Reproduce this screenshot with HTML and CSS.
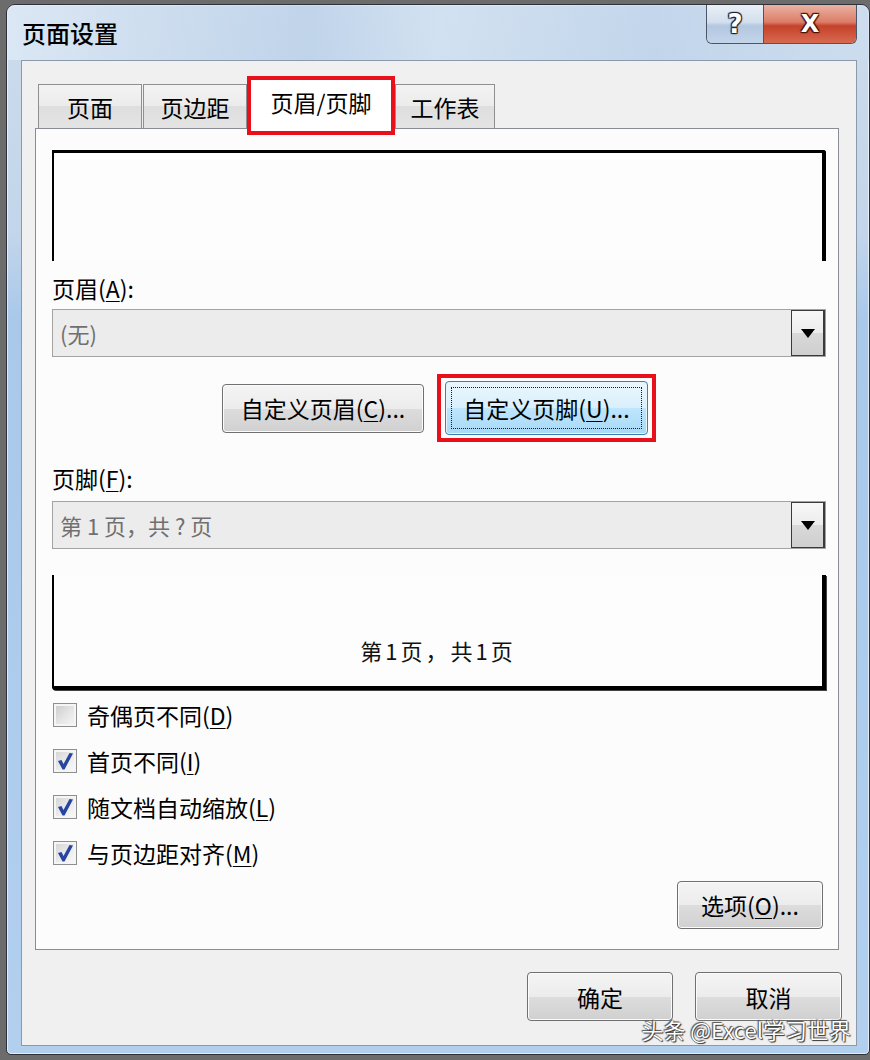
FILE: index.html
```html
<!DOCTYPE html>
<html lang="zh-CN">
<head>
    <meta charset="UTF-8">
    <title>页面设置</title>
    <link rel="stylesheet" href="styles.css">
</head>
<body>
    <div class="window">
        <div class="titlebar">
            <span class="title">页面设置</span>
            <div class="caption">
                <span class="cap help">?</span>
                <span class="cap close">X</span>
            </div>
        </div>
        <div class="client">
            <div class="tabs">
                <div class="tab tab-page">页面</div>
                <div class="tab tab-margin">页边距</div>
                <div class="tab active">页眉/页脚</div>
                <div class="tab tab-sheet">工作表</div>
            </div>
            <div class="panel">
                <div class="preview preview-top"></div>
                <div class="label label-header">页眉(<u>A</u>):</div>
                <div class="combo combo-header">
                    <span class="combo-text">(无)</span>
                    <span class="drop"><svg width="14" height="9" viewBox="0 0 14 9"><path d="M0 0H14L7 9Z" fill="#000"/></svg></span>
                </div>
                <div class="btn-row">
                    <button class="btn btn-custom">自定义页眉(<u>C</u>)...</button>
                    <div class="highlight">
                        <button class="btn btn-custom focused">自定义页脚(<u>U</u>)...</button>
                    </div>
                </div>
                <div class="label label-footer">页脚(<u>F</u>):</div>
                <div class="combo combo-footer">
                    <span class="combo-text">第 1 页，共 ? 页</span>
                    <span class="drop"><svg width="14" height="9" viewBox="0 0 14 9"><path d="M0 0H14L7 9Z" fill="#000"/></svg></span>
                </div>
                <div class="preview preview-bottom">
                    <span class="preview-text">第1页，共1页</span>
                </div>
                <div class="checks">
                    <div class="check">
                        <span class="box"></span>
                        <span>奇偶页不同(<u>D</u>)</span>
                    </div>
                    <div class="check">
                        <span class="box checked"><svg width="22" height="22" viewBox="0 0 22 22"><path d="M4 11L7.5 10L9.5 14L15.5 3L19 3.5L10.5 19.5H8.5Z" fill="#2744a0"/></svg></span>
                        <span>首页不同(<u>I</u>)</span>
                    </div>
                    <div class="check">
                        <span class="box checked"><svg width="22" height="22" viewBox="0 0 22 22"><path d="M4 11L7.5 10L9.5 14L15.5 3L19 3.5L10.5 19.5H8.5Z" fill="#2744a0"/></svg></span>
                        <span>随文档自动缩放(<u>L</u>)</span>
                    </div>
                    <div class="check">
                        <span class="box checked"><svg width="22" height="22" viewBox="0 0 22 22"><path d="M4 11L7.5 10L9.5 14L15.5 3L19 3.5L10.5 19.5H8.5Z" fill="#2744a0"/></svg></span>
                        <span>与页边距对齐(<u>M</u>)</span>
                    </div>
                </div>
                <div class="options-row">
                    <button class="btn btn-options">选项(<u>O</u>)...</button>
                </div>
            </div>
            <div class="dialog-btns">
                <button class="btn btn-ok">确定</button>
                <button class="btn btn-cancel">取消</button>
            </div>
        </div>
        <div class="watermark">头条 @Excel学习世界</div>
    </div>
</body>
</html>
```

FILE: styles.css
```css
body {
    margin: 0;
    background-color: #6c6c6c;
    font-family: "Noto Sans CJK SC", "Noto Sans", sans-serif;
    color: #000;
}
u {
    text-decoration-thickness: 1px;
    text-underline-offset: 3px;
}
.window {
    position: relative;
    width: 864px;
    height: 1051px;
    margin: 4px 0 0 6px;
    box-sizing: border-box;
    border: 1px solid #2e3138;
    border-radius: 9px 9px 5px 5px;
    background: linear-gradient(180deg, #cddcec 0%, #c2d5ea 22%, #a9c8ea 30%, #b2cfee 100%);
    box-shadow: inset 0 0 0 1px rgba(255, 255, 255, 0.6);
    display: flex;
    flex-direction: column;
}
.titlebar {
    height: 55px;
    display: flex;
    justify-content: space-between;
    padding: 0 12px 0 15px;
    background: linear-gradient(90deg, rgba(225,236,247,0.7) 0%, rgba(180,204,232,0.5) 35%, rgba(214,229,244,0.6) 50%, rgba(185,208,234,0.5) 75%, rgba(205,222,240,0.6) 100%);
    border-radius: 8px 8px 0 0;
}
.title {
    font-size: 24px;
    line-height: 55px;
    font-weight: 500;
}
.caption {
    display: flex;
    align-self: flex-start;
    border: 1px solid #4b5566;
    border-top: none;
    border-radius: 0 0 6px 6px;
    overflow: hidden;
}
.cap {
    height: 38px;
    display: flex;
    align-items: center;
    justify-content: center;
    color: #fff;
    font-family: "DejaVu Sans", sans-serif;
    font-weight: bold;
}
.help {
    width: 56px;
    font-size: 26px;
    background: linear-gradient(180deg, #e9eff7 0%, #d3dfed 45%, #b3c7e0 55%, #c4d5ea 100%);
    border-right: 1px solid #4b5566;
    text-shadow: 0 0 1px #1b2233, 1px 1px 1px #1b2233, -1px -1px 1px #1b2233, 1px -1px 1px #1b2233, -1px 1px 1px #1b2233;
}
.close {
    width: 92px;
    font-size: 24px;
    background: linear-gradient(180deg, #eab2a3 0%, #dc7d68 45%, #c5412a 55%, #d76a4f 100%);
    text-shadow: 0 0 1px #4a1005, 1px 1px 1px #4a1005, -1px -1px 1px #4a1005, 1px -1px 1px #4a1005, -1px 1px 1px #4a1005;
}
.client {
    width: 836px;
    height: 986px;
    margin-left: 14px;
    box-sizing: border-box;
    border: 1px solid #8a99ab;
    background-color: #f0f0f0;
    padding: 15px 17px 0 13px;
}
.tabs {
    display: flex;
    align-items: flex-end;
    height: 52px;
    padding-left: 3px;
}
.tab {
    height: 44px;
    box-sizing: border-box;
    border: 1px solid #8e8f8f;
    border-bottom: none;
    background: linear-gradient(180deg, #f3f3f3 0%, #ebebeb 50%, #dedede 50%, #e4e4e4 100%);
    font-size: 23px;
    display: flex;
    align-items: center;
    justify-content: center;
}
.tab-page {
    width: 104px;
    margin-right: 1px;
}
.tab-margin {
    width: 104px;
}
.tab-sheet {
    width: 100px;
}
.tab.active {
    position: relative;
    z-index: 2;
    width: 148px;
    height: 59px;
    margin-bottom: -7px;
    border: 4px solid #e8101b;
    background: #fff;
    padding-bottom: 8px;
}
.panel {
    height: 822px;
    box-sizing: border-box;
    border: 1px solid #898c95;
    background-color: #fcfcfc;
    padding: 21px 12px 0 16px;
}
.preview {
    box-sizing: border-box;
    border: 0 solid #000;
    background-color: #fdfdfe;
}
.preview-top {
    height: 111px;
    border-top-width: 3px;
    border-left-width: 2px;
    border-right-width: 4px;
    border-top-right-radius: 3px;
}
.label {
    font-size: 23px;
    line-height: 28px;
}
.label-header {
    margin-top: 13px;
}
.label-footer {
    margin-top: 22px;
}
.combo {
    height: 48px;
    box-sizing: border-box;
    border: 1px solid #a3a3a3;
    background-color: #ececec;
    display: flex;
    align-items: center;
    justify-content: space-between;
    color: #707070;
    font-size: 22px;
}
.combo-header {
    margin-top: 7px;
}
.combo-footer {
    margin-top: 9px;
}
.combo-text {
    padding-left: 7px;
}
.drop {
    width: 34px;
    height: 46px;
    box-sizing: border-box;
    border: 1px solid #3a3a3a;
    border-right-width: 2px;
    background: linear-gradient(180deg, #f7f7f7 0%, #ececec 50%, #d9d9d9 50%, #cfcfcf 100%);
    display: flex;
    align-items: center;
    justify-content: center;
}
.btn-row {
    height: 68px;
    margin-top: 17px;
    display: flex;
    align-items: center;
    justify-content: center;
    gap: 13px;
}
.btn {
    height: 49px;
    box-sizing: border-box;
    border: 1px solid #707070;
    border-radius: 4px;
    background: linear-gradient(180deg, #f4f4f4 0%, #ececec 50%, #dddddd 50%, #d0d0d0 100%);
    box-shadow: inset 0 0 0 1px #fbfbfb;
    font-family: "Noto Sans CJK SC", "Noto Sans", sans-serif;
    font-size: 23px;
    color: #000;
    padding: 0;
}
.btn-custom {
    width: 202px;
}
.highlight {
    border: 4px solid #e8101b;
    padding: 3px 4px;
}
.btn.focused {
    position: relative;
    width: 203px;
    height: 54px;
    border-color: #3c7fb1;
    background: linear-gradient(180deg, #eaf6fd 0%, #d9f0fc 50%, #bee6fd 50%, #a7d9f5 100%);
    box-shadow: inset 0 0 0 1px #e6f4fc;
}
.btn.focused::after {
    content: "";
    position: absolute;
    top: 5px;
    left: 5px;
    right: 5px;
    bottom: 5px;
    border: 1px dotted #1a1a1a;
}
.preview-bottom {
    height: 115px;
    margin-top: 26px;
    border-left-width: 2px;
    border-right-width: 4px;
    border-bottom-width: 4px;
    border-bottom-left-radius: 3px;
    box-shadow: 1px 1px 0 #444;
    display: flex;
    align-items: flex-end;
    justify-content: center;
    padding-bottom: 22px;
}
.preview-text {
    font-size: 22px;
    line-height: 28px;
    letter-spacing: 3px;
    color: #111;
}
.checks {
    margin-top: 2px;
}
.check {
    height: 46px;
    display: flex;
    align-items: center;
    gap: 10px;
    font-size: 23px;
    padding-left: 1px;
}
.box {
    width: 24px;
    height: 24px;
    box-sizing: border-box;
    border: 1px solid #8e8f8f;
    background: linear-gradient(135deg, #c9c9c9 0%, #e6e6e6 55%, #f7f7f7 100%);
    box-shadow: inset 0 0 0 2px #f5f5f5;
    display: flex;
    align-items: center;
    justify-content: center;
}
.box.checked {
    background: linear-gradient(135deg, #d2d2d2 0%, #ececec 55%, #fafafa 100%);
}
.options-row {
    display: flex;
    justify-content: flex-end;
    margin-top: 5px;
    padding-right: 3px;
}
.btn-options {
    width: 146px;
    height: 48px;
}
.dialog-btns {
    display: flex;
    justify-content: flex-end;
    gap: 22px;
    margin-top: 22px;
    margin-right: -3px;
}
.btn-ok {
    width: 146px;
}
.btn-cancel {
    width: 147px;
}
.watermark {
    position: absolute;
    top: 1008px;
    right: 18px;
    font-size: 22px;
    color: #fff;
    text-shadow: 0 0 1px #222, 1px 1px 1px #333, -1px -1px 1px #555;
}
```
